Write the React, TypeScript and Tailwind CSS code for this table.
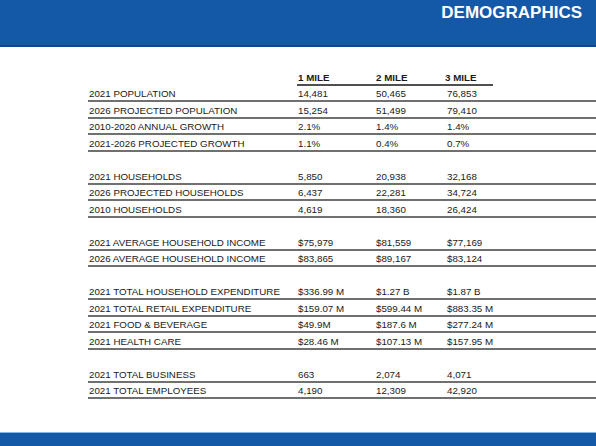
const rows: (string[] | null)[] = [
  ["2021 POPULATION", "14,481", "50,465", "76,853"],
  ["2026 PROJECTED POPULATION", "15,254", "51,499", "79,410"],
  ["2010-2020 ANNUAL GROWTH", "2.1%", "1.4%", "1.4%"],
  ["2021-2026 PROJECTED GROWTH", "1.1%", "0.4%", "0.7%"],
  null,
  ["2021 HOUSEHOLDS", "5,850", "20,938", "32,168"],
  ["2026 PROJECTED HOUSEHOLDS", "6,437", "22,281", "34,724"],
  ["2010 HOUSEHOLDS", "4,619", "18,360", "26,424"],
  null,
  ["2021 AVERAGE HOUSEHOLD INCOME", "$75,979", "$81,559", "$77,169"],
  ["2026 AVERAGE HOUSEHOLD INCOME", "$83,865", "$89,167", "$83,124"],
  null,
  ["2021 TOTAL HOUSEHOLD EXPENDITURE", "$336.99 M", "$1.27 B", "$1.87 B"],
  ["2021 TOTAL RETAIL EXPENDITURE", "$159.07 M", "$599.44 M", "$883.35 M"],
  ["2021 FOOD & BEVERAGE", "$49.9M", "$187.6 M", "$277.24 M"],
  ["2021 HEALTH CARE", "$28.46 M", "$107.13 M", "$157.95 M"],
  null,
  ["2021 TOTAL BUSINESS", "663", "2,074", "4,071"],
  ["2021 TOTAL EMPLOYEES", "4,190", "12,309", "42,920"],
];

export default function App() {
  return (
    <div className="w-screen h-screen flex flex-col bg-white overflow-hidden" style={{ fontFamily: '"Liberation Sans", Arial, sans-serif' }}>
      {/* top band */}
      <div className="h-[47px] shrink-0 bg-[#1459a8] border-b-2 border-[#0f4787] flex justify-end pr-[14px] pt-[3px]">
        <div className="text-white font-bold text-[17px] leading-[20px]">DEMOGRAPHICS</div>
      </div>

      <div className="flex-1 pl-[88px] pt-[22px] text-[9.75px] text-[#1a1a1a]">
        <div className="grid grid-cols-[209px_79px_71px_46px] h-[16.5px]">
          <div />
          <div className="col-span-3 grid grid-cols-[79px_71px_46px] items-end pb-[2px] border-b-2 border-[#4f4f4f] font-bold leading-[8px]">
            <div className="pl-[1px]">1 MILE</div>
            <div>2 MILE</div>
            <div className="-ml-[2px]">3 MILE</div>
          </div>
        </div>
        {rows.map((r, i) =>
          r ? (
            <div key={i} className="grid grid-cols-[209px_79px_71px_46px] h-[16.5px] items-end pb-[2px] border-b-2 border-[#707070] leading-[8px] whitespace-nowrap">
              <div className="pl-[1px]">{r[0]}</div>
              <div className="pl-[1px]">{r[1]}</div>
              <div>{r[2]}</div>
              <div>{r[3]}</div>
            </div>
          ) : (
            <div key={i} className="h-[16.5px]" />
          )
        )}
      </div>

      {/* bottom band */}
      <div className="h-[14px] shrink-0 bg-[#1459a8] border-t border-[#86b8e4]" />
    </div>
  );
}
